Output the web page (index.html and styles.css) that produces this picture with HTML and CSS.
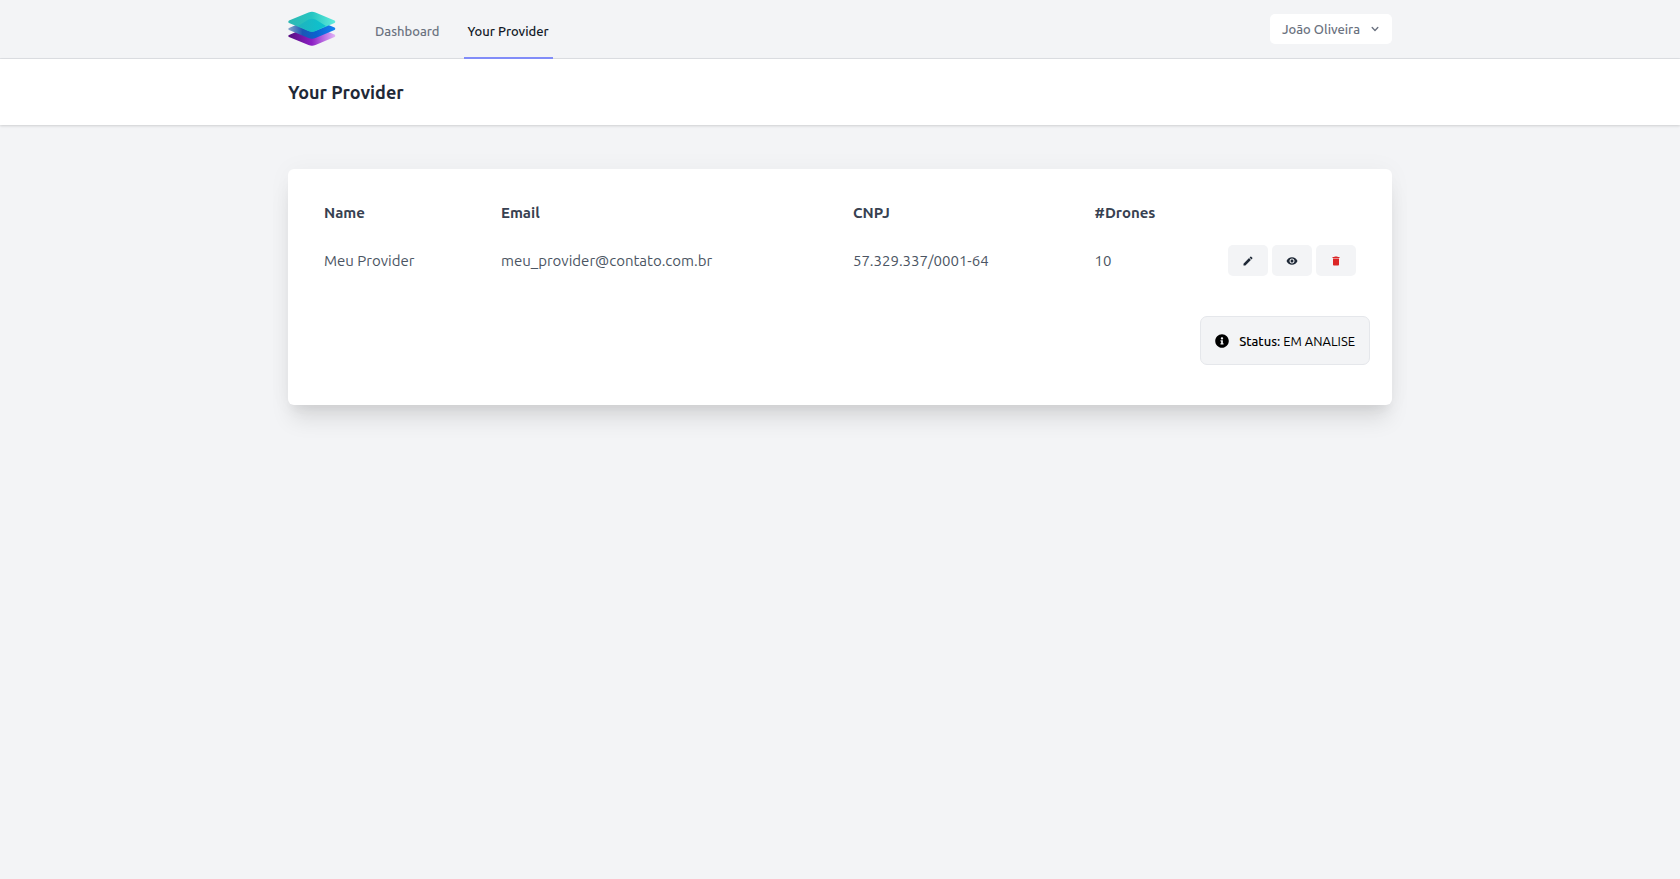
FILE: index.html
```html
<!DOCTYPE html>
<html lang="en">
<head>
<meta charset="utf-8">
<meta name="viewport" content="width=device-width, initial-scale=1">
<title>Your Provider</title>
<link rel="stylesheet" href="styles.css">
</head>
<body>
<nav class="navbar">
  <div class="container navbar-inner">
    <a class="logo" href="#" aria-label="Home">
      <svg width="48" height="36" viewBox="0 0 48 36" aria-hidden="true">
        <defs>
          <linearGradient id="layer-top" x1="0" y1="0" x2="1" y2="0"><stop offset="0" stop-color="#2db8b3"/><stop offset=".5" stop-color="#25c5c2"/><stop offset="1" stop-color="#62ecdc"/></linearGradient>
          <linearGradient id="layer-mid" x1="0" y1="0" x2="1" y2="0"><stop offset="0" stop-color="#89a5cb"/><stop offset=".3" stop-color="#1c57b5"/><stop offset=".6" stop-color="#0b62cf"/><stop offset="1" stop-color="#1482f2"/></linearGradient>
          <linearGradient id="layer-bottom" x1="0" y1="0" x2="1" y2="0"><stop offset="0" stop-color="#560c80"/><stop offset=".5" stop-color="#8c1fc4"/><stop offset=".75" stop-color="#b86ae0"/><stop offset="1" stop-color="#e2b5f7"/></linearGradient>
          <linearGradient id="layer-overlap" x1="0" y1="0" x2="1" y2="0"><stop offset="0" stop-color="#20b4bd"/><stop offset="1" stop-color="#0bc3d0"/></linearGradient>
        </defs>
        <path fill="url(#layer-bottom)" d="M1 24 20.500 15.500Q24 14 27.500 15.500L46.500 23.500Q48 24.500 46.500 26L27.500 34Q24 35.500 20.500 34L1 26Q-.5 25 1 24Z"/>
        <path fill="url(#layer-mid)" d="M1 17 20.500 8.500Q24 7 27.500 8.500L46.500 16.500Q48 17.500 46.500 19L27.500 27Q24 28.500 20.500 27L1 19Q-.5 18 1 17Z"/>
        <path fill="url(#layer-top)" d="M1 9.500 20.500 1.500Q24 0 27.500 1.500L46.500 9.500Q48 10.500 46.500 12L27.500 20Q24 21.500 20.500 20L1 12Q-.5 11 1 9.500Z"/>
        <path fill="url(#layer-overlap)" d="M10 15 20.500 8.500Q24 7 27.500 8.500L38 15 27.500 20Q24 21.500 20.500 20Z"/>
      </svg>
    </a>
    <div class="nav-links">
      <a class="nav-link" href="#">Dashboard</a>
      <a class="nav-link nav-link-active" href="#" aria-current="page">Your Provider</a>
    </div>
    <button class="user-button" type="button">
      João Oliveira
      <svg width="14" height="14" viewBox="0 0 20 20" aria-hidden="true"><path fill="currentColor" fill-rule="evenodd" d="M5.293 7.293a1 1 0 011.414 0L10 10.586l3.293-3.293a1 1 0 111.414 1.414l-4 4a1 1 0 01-1.414 0l-4-4a1 1 0 010-1.414z"/></svg>
    </button>
  </div>
</nav>
<header class="page-header">
  <div class="container"><h1 class="page-title">Your Provider</h1></div>
</header>
<main class="container main">
  <section class="card">
    <table class="providers">
      <colgroup><col class="col-name"><col class="col-email"><col class="col-cnpj"><col class="col-drones"><col></colgroup>
      <thead>
        <tr><th>Name</th><th>Email</th><th>CNPJ</th><th>#Drones</th><td></td></tr>
      </thead>
      <tbody>
        <tr>
          <td>Meu Provider</td><td>meu_provider@contato.com.br</td><td>57.329.337/0001-64</td><td>10</td>
          <td>
            <div class="actions">
              <button class="action" type="button" aria-label="Edit"><svg width="12" height="12" viewBox="0 0 24 24" aria-hidden="true"><path fill="currentColor" d="M3 17.250V21h3.750L17.810 9.940l-3.750-3.750L3 17.250zM20.710 7.040c.39-.39.39-1.020 0-1.410l-2.340-2.340c-.39-.39-1.020-.39-1.410 0l-1.830 1.830 3.750 3.750 1.830-1.830z"/></svg></button>
              <button class="action" type="button" aria-label="View"><svg width="12" height="12" viewBox="0 0 24 24" aria-hidden="true"><path fill="currentColor" d="M12 4.500C7 4.500 2.730 7.610 1 12c1.730 4.390 6 7.500 11 7.500s9.270-3.110 11-7.500c-1.730-4.390-6-7.500-11-7.500zM12 17c-2.760 0-5-2.240-5-5s2.240-5 5-5 5 2.240 5 5-2.240 5-5 5zm0-8c-1.660 0-3 1.340-3 3s1.340 3 3 3 3-1.340 3-3-1.340-3-3-3z"/></svg></button>
              <button class="action action-delete" type="button" aria-label="Delete"><svg width="12" height="12" viewBox="0 0 24 24" aria-hidden="true"><path fill="currentColor" d="M6 19c0 1.100.9 2 2 2h8c1.100 0 2-.9 2-2V7H6v12zM19 4h-3.500l-1-1h-5l-1 1H5v2h14V4z"/></svg></button>
            </div>
          </td>
        </tr>
      </tbody>
    </table>
    <div class="status" role="status">
      <svg width="14" height="14" viewBox="0 0 512 512" aria-hidden="true"><path fill="currentColor" d="M256 8C119.043 8 8 119.083 8 256c0 136.997 111.043 248 248 248s248-111.003 248-248C504 119.083 392.957 8 256 8zm0 110c23.196 0 42 18.804 42 42s-18.804 42-42 42-42-18.804-42-42 18.804-42 42-42zm56 254c0 6.627-5.373 12-12 12h-88c-6.627 0-12-5.373-12-12v-24c0-6.627 5.373-12 12-12h12v-64h-12c-6.627 0-12-5.373-12-12v-24c0-6.627 5.373-12 12-12h64c6.627 0 12 5.373 12 12v100h12c6.627 0 12 5.373 12 12v24z"/></svg>
      <span><strong>Status:</strong> EM ANALISE</span>
    </div>
  </section>
</main>
</body>
</html>
```
FILE: styles.css
```css
*, *::before, *::after { box-sizing: border-box; }
body {
  margin: 0;
  min-height: 100vh;
  background: #f3f4f6;
  color: #4b5563;
  font-family: Ubuntu, "Noto Sans", "Open Sans", sans-serif;
  font-size: 15px;
  line-height: 20px;
}
button { font: inherit; border: 0; cursor: pointer; }
svg { display: block; flex: none; }
.container { max-width: 1104px; margin: 0 auto; }
.navbar { border-bottom: 1px solid #dfe1e5; }
.navbar-inner { display: flex; height: 58px; }
.logo { display: flex; align-items: center; }
.nav-links { display: flex; gap: 20px; margin: 0 auto -1px 35px; }
.nav-link {
  display: flex;
  align-items: center;
  padding: 4px 4px 0;
  border-bottom: 2px solid transparent;
  color: #6b7280;
  font-size: 13px;
  font-weight: 500;
  text-decoration: none;
}
.nav-link-active { border-color: #818cf8; color: #111827; }
.user-button {
  display: flex;
  align-items: center;
  align-self: center;
  gap: 8px;
  height: 30px;
  padding: 0 10px 0 12px;
  border-radius: 5px;
  background: #fff;
  color: #6b7280;
  font-size: 13px;
  font-weight: 500;
}
.page-header {
  padding: 20px 0;
  background: #fff;
  box-shadow: 0 1px 3px rgba(0, 0, 0, .1), 0 1px 2px rgba(0, 0, 0, .06);
}
.page-title { margin: 0; color: #1f2937; font-size: 18px; line-height: 26px; font-weight: 700; }
.main { padding: 44px 0; }
.card {
  display: flex;
  flex-direction: column;
  padding: 23px 22px 40px;
  border-radius: 6px;
  background: #fff;
  box-shadow: 0 18px 22px -4px rgba(0, 0, 0, .1), 0 9px 9px -4px rgba(0, 0, 0, .04), 0 0 24px rgba(0, 0, 0, .04);
}
.providers { width: 100%; table-layout: fixed; border-collapse: collapse; }
.providers th, .providers td { padding: 11px 14px; text-align: left; }
.providers th { color: #374151; font-weight: 600; }
.col-name { width: 16.7%; }
.col-email { width: 33.2%; }
.col-cnpj { width: 22.8%; }
.col-drones { width: 12%; }
.actions { display: flex; justify-content: flex-end; gap: 4px; }
.action {
  display: flex;
  align-items: center;
  padding: 10px 14px;
  height: 31px;
  border-radius: 5px;
  background: #f3f4f6;
  color: #1f2937;
}
.action-delete { color: #dc2626; }
.status {
  display: flex;
  align-items: center;
  align-self: flex-end;
  gap: 10px;
  margin-top: 29px;
  padding: 14px 14px 13px;
  border: 1px solid #e5e7eb;
  border-radius: 7px;
  background: #f3f4f6;
  color: #000;
  font-size: 13px;
}
.status strong { font-weight: 500; }
```
